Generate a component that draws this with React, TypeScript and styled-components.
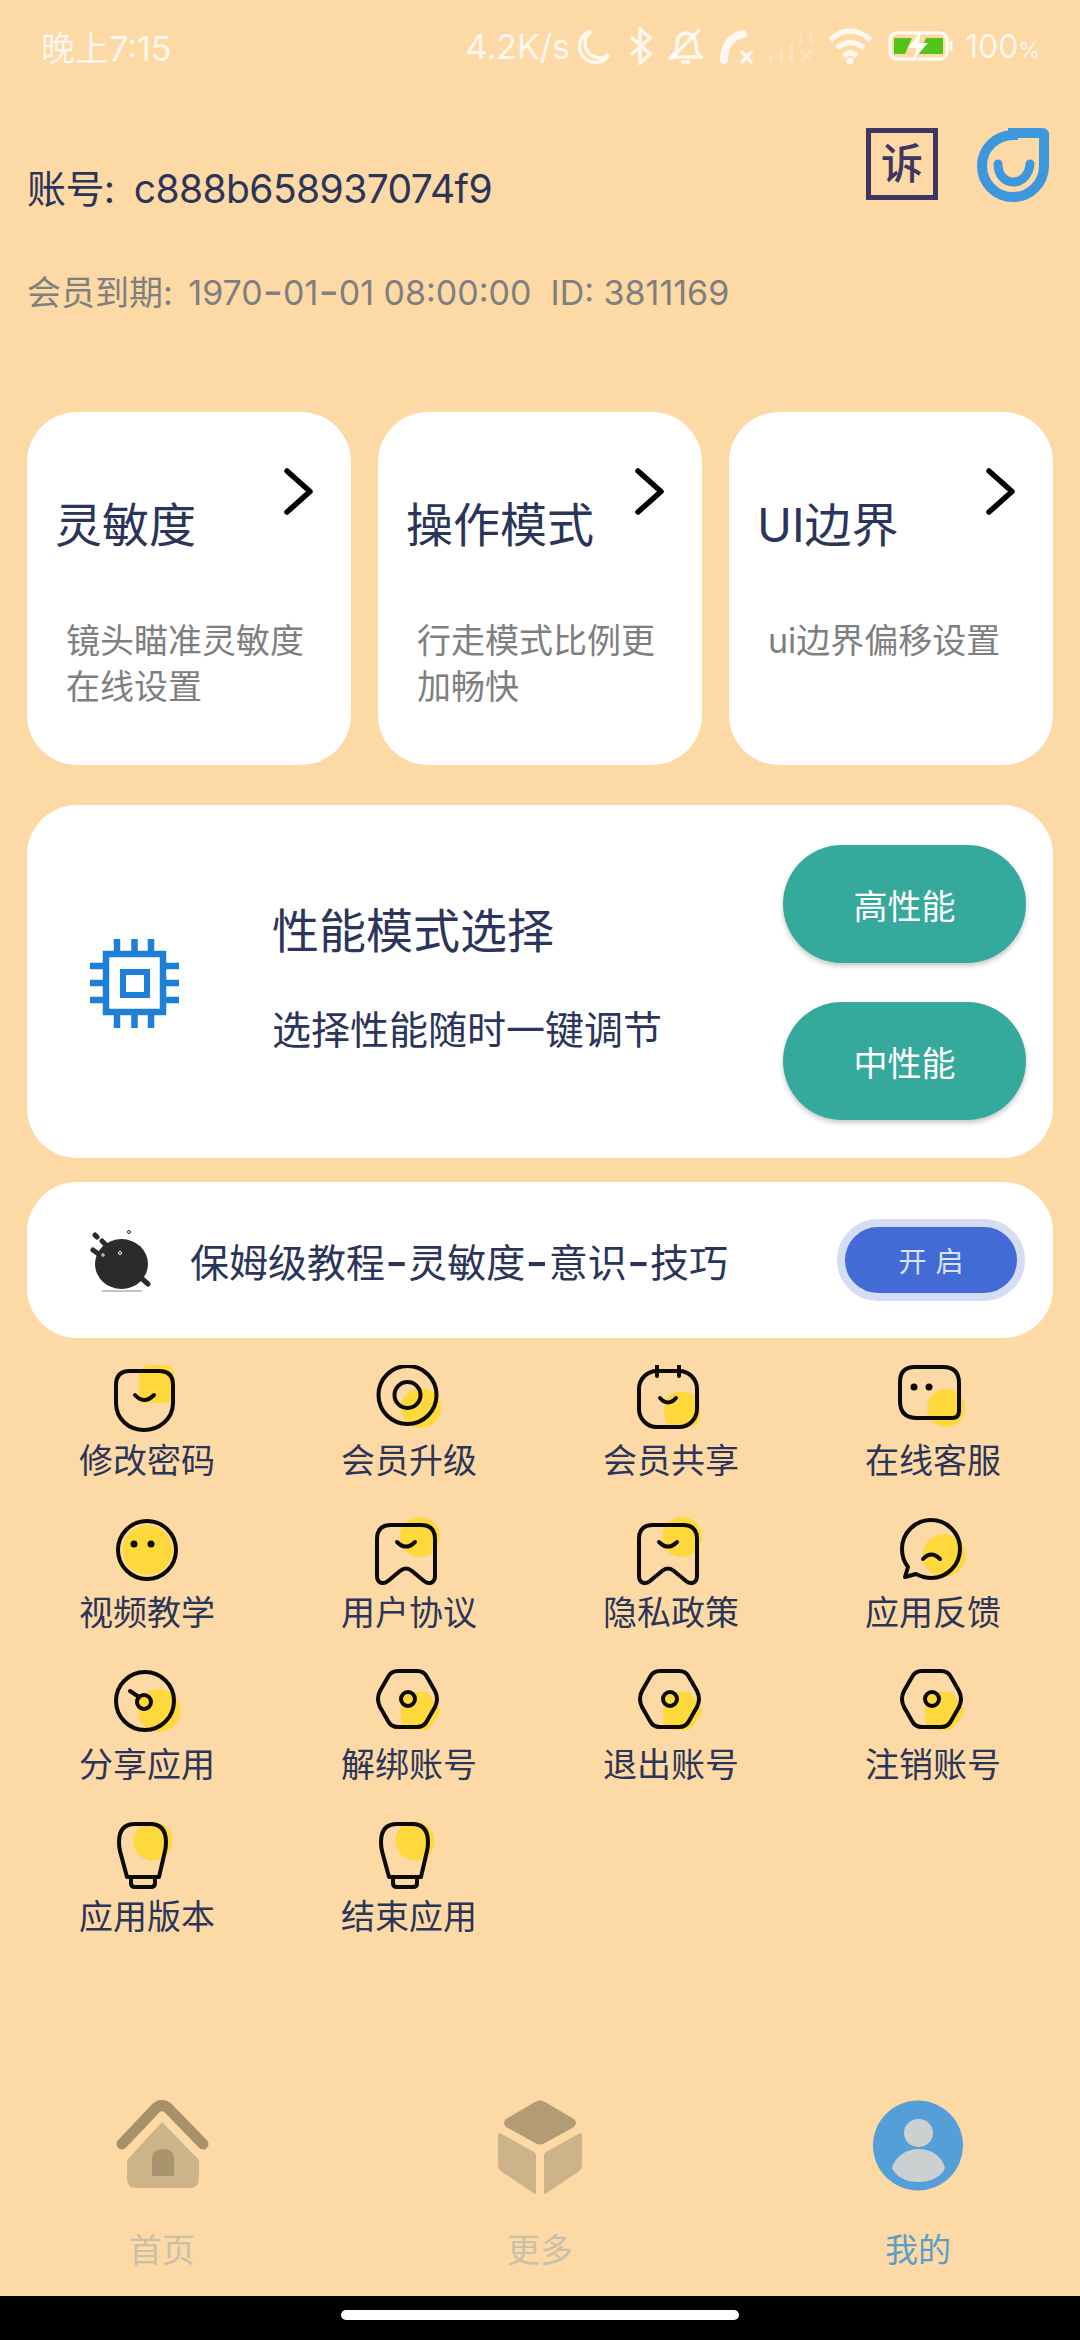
import React from 'react';
import styled, { createGlobalStyle } from 'styled-components';

const GlobalStyle = createGlobalStyle`
  html, body {
    margin: 0;
    padding: 0;
    background: #fdd9a5;
  }
  * {
    box-sizing: border-box;
  }
`;

const INK = '#2b3559';
const GREY = '#7f7f7f';
const YELLOW = '#ffd93b';
const LINE = '#0d0a06';
const STATUS = 'rgba(255, 255, 255, 0.82)';

const Page = styled.div`
  width: 1080px;
  height: 2340px;
  display: flex;
  flex-direction: column;
  background: #fdd9a5;
  font-family: Inter, 'Noto Sans CJK SC', sans-serif;
  overflow: hidden;
`;

/* status bar */
const StatusBar = styled.div`
  height: 92px;
  flex: none;
  display: flex;
  align-items: center;
  justify-content: space-between;
  padding: 0 40px 0 41px;
  color: ${STATUS};
  font-size: 34px;
`;

const StatusRight = styled.div`
  display: flex;
  align-items: center;
`;

const StatusIcon = styled.svg<{ $gap: number }>`
  display: block;
  flex: none;
  margin-left: ${(p) => p.$gap}px;
`;

const Speed = styled.span`
  font-size: 34px;
`;

const Percent = styled.span`
  margin-left: 11px;
  font-size: 32px;

  small {
    font-size: 22px;
  }
`;

/* account header */
const Header = styled.div`
  display: flex;
  justify-content: space-between;
  align-items: flex-end;
  min-height: 86px;
  margin-top: 36px;
  padding: 0 31px 0 27px;
`;

const Account = styled.div`
  font-size: 39px;
  line-height: 50px;
  letter-spacing: -0.6px;
  word-spacing: 9px;
  color: ${INK};
`;

const HeaderIcons = styled.div`
  display: flex;
  align-self: flex-start;
  gap: 38px;
`;

const ComplainBox = styled.div`
  width: 72px;
  height: 72px;
  border: 5px solid #3f3560;
  display: flex;
  align-items: center;
  justify-content: center;
  font-size: 42px;
  font-weight: 500;
  color: #3f3560;
  line-height: 1;
`;

const Expiry = styled.div`
  margin-top: 56px;
  padding-left: 27px;
  font-size: 34px;
  line-height: 46px;
  color: ${GREY};
  white-space: pre;
`;

const ExpiryLabel = styled.span`
  margin-right: 6px;
`;

const Dash = styled.span`
  font-size: 1.3em;
  line-height: 0;
  vertical-align: -0.05em;
`;

/* three setting cards */
const CardRow = styled.div`
  margin-top: 96px;
  padding: 0 27px;
  display: grid;
  grid-template-columns: repeat(3, 324px);
  gap: 27px;
`;

const SettingCard = styled.div`
  height: 353px;
  border-radius: 50px;
  background: #fff;
  padding-top: 56px;
`;

const CardArrow = styled.div`
  display: flex;
  justify-content: flex-end;
  padding-right: 38px;
`;

const CardTitle = styled.div`
  margin-top: -13px;
  padding-left: 28px;
  font-size: 47px;
  line-height: 46px;
  color: ${INK};
`;

const CardDesc = styled.div`
  margin-top: 70px;
  padding: 0 30px 0 39px;
  font-size: 34px;
  line-height: 46px;
  color: ${GREY};
`;

/* performance card */
const PerfCard = styled.div`
  margin: 40px 27px 0;
  height: 353px;
  border-radius: 50px;
  background: #fff;
  display: flex;
  padding: 40px 27px 0 63px;
`;

const ChipIcon = styled.svg`
  flex: none;
  margin-top: 94px;
`;

const PerfText = styled.div`
  flex: 1;
  margin-left: 93px;
  padding-top: 59px;
`;

const PerfTitle = styled.div`
  font-size: 47px;
  line-height: 54px;
  color: ${INK};
`;

const PerfSub = styled.div`
  margin-top: 48px;
  font-size: 39px;
  line-height: 48px;
  color: ${INK};
  white-space: nowrap;
`;

const PerfButtons = styled.div`
  flex: none;
  display: flex;
  flex-direction: column;
  gap: 39px;
`;

const PerfButton = styled.div`
  width: 243px;
  height: 118px;
  border-radius: 59px;
  background: #35a99b;
  box-shadow: 0 3px 5px rgba(0, 0, 0, 0.22);
  color: #fff;
  font-size: 34px;
  display: flex;
  align-items: center;
  justify-content: center;
`;

/* tutorial strip */
const TutorialCard = styled.div`
  margin: 24px 27px 0;
  height: 156px;
  border-radius: 50px;
  background: #fff;
  display: flex;
  align-items: center;
  padding: 0 28px 0 63px;
`;

const TutorialText = styled.div`
  flex: 1;
  margin-left: 38px;
  font-size: 39px;
  color: ${INK};
  white-space: nowrap;
`;

const OpenButton = styled.div`
  width: 188px;
  height: 82px;
  border-radius: 41px;
  border: 8px solid #d5dcf4;
  background: #426bd6;
  color: #dbe3fa;
  font-size: 28px;
  letter-spacing: 9px;
  padding-left: 9px;
  display: flex;
  align-items: center;
  justify-content: center;
`;

/* menu grid */
const MenuGrid = styled.div`
  margin-top: 27px;
  padding: 0 16px;
  display: grid;
  grid-template-columns: repeat(4, 262px);
`;

const MenuItem = styled.div`
  height: 152px;
  display: flex;
  flex-direction: column;
  align-items: center;
`;

const MenuGlyph = styled.svg`
  display: block;
  flex: none;
`;

const MenuLabel = styled.div`
  font-size: 34px;
  line-height: 52px;
  color: ${INK};
`;

/* bottom tabs */
const TabBar = styled.div`
  margin-top: auto;
  padding: 0 36px 24px;
  display: grid;
  grid-template-columns: repeat(3, 252px);
  column-gap: 126px;
`;

const Tab = styled.div`
  display: flex;
  flex-direction: column;
  align-items: center;
`;

const TabIconSlot = styled.div`
  height: 96px;
  display: flex;
  align-items: flex-start;
`;

const TabLabel = styled.div<{ $active?: boolean }>`
  margin-top: 32px;
  font-size: 33px;
  line-height: 44px;
  color: ${(p) => (p.$active ? '#5a9fc9' : '#c9c0aa')};
`;

const NavBar = styled.div`
  height: 44px;
  flex: none;
  background: #000;
  display: flex;
  justify-content: center;
  padding-top: 14px;
`;

const HomePill = styled.div`
  width: 398px;
  height: 10px;
  border-radius: 5px;
  background: #fff;
`;

const Glyph: React.FC<{ children: React.ReactNode }> = ({ children }) => (
  <MenuGlyph width={70} height={70} viewBox="0 0 70 70" fill="none" stroke={LINE} strokeWidth={4} strokeLinecap="round" strokeLinejoin="round">
    {children}
  </MenuGlyph>
);

const ShieldIcon = () => (
  <Glyph>
    <path d="M27 12 Q27 0 39 0 H52 Q62 0 62 10 V30 Q62 38 52 38 H27 Z" fill={YELLOW} stroke="none" />
    <path d="M18 6 H47 Q61 6 61 20 V38 C61 54 47 65 32 65 C17 65 4 54 4 38 V20 Q4 6 18 6 Z" />
    <path d="M23 30 Q32 40 42 30" />
  </Glyph>
);

const RingIcon = () => (
  <Glyph>
    <circle cx="47" cy="43" r="20" fill={YELLOW} stroke="none" />
    <circle cx="33.5" cy="30" r="29" />
    <circle cx="33.5" cy="30" r="13" />
  </Glyph>
);

const CalendarIcon = () => (
  <Glyph>
    <path d="M28 44 Q28 27 46 27 Q64 27 64 44 V50 Q64 62 52 62 H36 Q28 62 28 44 Z" fill={YELLOW} stroke="none" />
    <rect x="3" y="6" width="58" height="56" rx="18" />
    <path d="M21 1 V11 M43 1 V11" />
    <path d="M24 33 Q32 42 40 33" />
  </Glyph>
);

const ChatSquareIcon = () => (
  <Glyph>
    <circle cx="48" cy="43" r="19" fill={YELLOW} stroke="none" />
    <path d="M17 2 H45 Q61 2 61 18 V46 Q61 53 54 53 H19 Q2 53 2 36 V17 Q2 2 17 2 Z" />
    <circle cx="16" cy="22" r="3.5" fill={LINE} stroke="none" />
    <circle cx="31" cy="22" r="3.5" fill={LINE} stroke="none" />
  </Glyph>
);

const FaceIcon = () => (
  <Glyph>
    <circle cx="35.5" cy="33" r="25" fill={YELLOW} stroke="none" />
    <circle cx="35" cy="33" r="29" />
    <circle cx="22" cy="27" r="3.5" fill={LINE} stroke="none" />
    <circle cx="39" cy="27" r="3.5" fill={LINE} stroke="none" />
  </Glyph>
);

const ToothIcon = () => (
  <Glyph>
    <circle cx="46" cy="20" r="20" fill={YELLOW} stroke="none" />
    <path d="M17 8 H47 Q61 8 61 22 V59 C61 66 55 68 50 64 L38 54 Q32 49 26 54 L14 64 C9 68 3 66 3 59 V22 Q3 8 17 8 Z" />
    <path d="M23 25 Q32 34 41 25" />
  </Glyph>
);

const BubbleIcon = () => (
  <Glyph>
    <circle cx="46" cy="38.5" r="21.5" fill={YELLOW} stroke="none" />
    <path d="M33 3 C49 3 62 16 62 32 C62 48 49 61 33 61 C27 61 22 59 18 57 L7 60 L10 50 C6 45 4 39 4 32 C4 16 17 3 33 3 Z" />
    <path d="M25 42 Q33 33 42 42" />
  </Glyph>
);

const DialIcon = () => (
  <Glyph>
    <circle cx="47" cy="41.5" r="21.5" fill={YELLOW} stroke="none" />
    <circle cx="33" cy="32" r="29" />
    <circle cx="32" cy="33" r="7" fill={YELLOW} />
    <path d="M18 22 L27 28" />
  </Glyph>
);

const HexIcon = () => (
  <Glyph>
    <path d="M27 33 Q27 23 37 23 H53 L66 40 Q66 46 62 50 L56 58 Q54 61 50 61 H38 Q27 61 27 50 Z" fill={YELLOW} stroke="none" />
    <path d="M24 2 H43 Q50 2 53 8 L61 22 Q65 30 61 38 L53 52 Q50 58 43 58 H24 Q17 58 14 52 L6 38 Q2 30 6 22 L14 8 Q17 2 24 2 Z" />
    <circle cx="34" cy="30" r="7" fill={YELLOW} />
  </Glyph>
);

const BulbIcon = () => (
  <Glyph>
    <circle cx="41" cy="20" r="19.5" fill={YELLOW} stroke="none" />
    <path d="M23 3 H38 Q54 3 54 21 Q54 26 53 30 L47 56 H15 L8 30 Q7 26 7 21 Q7 3 23 3 Z" />
    <path d="M19 57 V62 Q19 66 23 66 H39 Q43 66 43 62 V57" />
  </Glyph>
);

const menuItems: { label: string; icon: React.FC }[] = [
  { label: '修改密码', icon: ShieldIcon },
  { label: '会员升级', icon: RingIcon },
  { label: '会员共享', icon: CalendarIcon },
  { label: '在线客服', icon: ChatSquareIcon },
  { label: '视频教学', icon: FaceIcon },
  { label: '用户协议', icon: ToothIcon },
  { label: '隐私政策', icon: ToothIcon },
  { label: '应用反馈', icon: BubbleIcon },
  { label: '分享应用', icon: DialIcon },
  { label: '解绑账号', icon: HexIcon },
  { label: '退出账号', icon: HexIcon },
  { label: '注销账号', icon: HexIcon },
  { label: '应用版本', icon: BulbIcon },
  { label: '结束应用', icon: BulbIcon },
];

const Chevron = () => (
  <svg width="30" height="47" viewBox="0 0 30 47" fill="none" stroke="#000" strokeWidth="5.5" strokeLinecap="round" strokeLinejoin="round">
    <path d="M4 3 L27 23.5 L4 44" />
  </svg>
);

const settingCards = [
  { title: '灵敏度', desc: '镜头瞄准灵敏度在线设置' },
  { title: '操作模式', desc: '行走模式比例更加畅快' },
  { title: 'UI边界', desc: 'ui边界偏移设置' },
];

const App: React.FC = () => (
  <Page>
    <GlobalStyle />
    <StatusBar>
      <span>晚上7:15</span>
      <StatusRight>
        <Speed>4.2K/s</Speed>
        <StatusIcon $gap={8} width="33" height="38" viewBox="0 0 33 38" fill="none" stroke="#fff" strokeOpacity=".82" strokeWidth="3.5">
          <path d="M13 4 A16 16 0 1 0 31 28 A15 15 0 0 1 13 4 Z" />
        </StatusIcon>
        <StatusIcon $gap={17} width="25" height="38" viewBox="0 0 25 38" fill="none" stroke="#fff" strokeOpacity=".82" strokeWidth="3.5">
          <path d="M3 10 L22 27 L12 36 V2 L22 11 L3 28" />
        </StatusIcon>
        <StatusIcon $gap={15} width="35" height="38" viewBox="0 0 35 38" fill="none" stroke="#fff" strokeOpacity=".82" strokeWidth="3.5">
          <path d="M3 30 Q9 25 9 17 Q9 7 18 6 Q27 7 28 18 Q28 26 33 30 Z" />
          <path d="M2 33 L32 2" />
          <path d="M13 35 H22" />
        </StatusIcon>
        <StatusIcon $gap={16} width="34" height="36" viewBox="0 0 34 36" fill="none" stroke="#fff" strokeOpacity=".82" strokeLinecap="round">
          <path d="M24 6 C12 8 5 18 5 32" strokeWidth="8" />
          <path d="M23 24 L32 34 M32 24 L23 34" strokeWidth="3.5" />
        </StatusIcon>
        <StatusIcon $gap={15} width="46" height="32" viewBox="0 0 46 32" fill="none" stroke="#fff" strokeOpacity=".25" strokeWidth="4">
          <path d="M3 32 V26 M13 32 V20 M23 32 V13" />
          <path d="M33 4 V14 M33 20 L44 31 M44 20 L33 31 M43 2 V14" strokeWidth="3" />
        </StatusIcon>
        <StatusIcon $gap={13} width="47" height="38" viewBox="0 0 47 38" fill="none" stroke="#fff" strokeOpacity=".82" strokeWidth="5.5">
          <path d="M3 13 Q23 -5 44 13" />
          <path d="M10 21 Q23 10 37 21" />
          <path d="M17 29 Q23 23 30 29" />
          <circle cx="23" cy="34" r="3.500" fill="#fff" fillOpacity=".82" stroke="none" />
        </StatusIcon>
        <StatusIcon $gap={14} width="66" height="30" viewBox="0 0 66 30" fill="none">
          <rect x="2" y="2" width="57" height="26" rx="7" stroke="#fff" strokeOpacity=".82" strokeWidth="3.500" />
          <path d="M6 7 H24 L17 23 H6 Z M38 7 H55 V23 H31 Z" fill="#52c41a" />
          <path d="M33 0 L20 17 H29 L24 30 L40 12 H31 Z" fill="#fff" fillOpacity=".9" />
          <path d="M63 10 V20" stroke="#fff" strokeOpacity=".82" strokeWidth="3" />
        </StatusIcon>
        <Percent>
          100<small>%</small>
        </Percent>
      </StatusRight>
    </StatusBar>

    <Header>
      <Account>账号: c888b658937074f9</Account>
      <HeaderIcons>
        <ComplainBox>诉</ComplainBox>
        <svg width="73" height="74" viewBox="0 0 73 74" fill="none" stroke="#3d97dc" strokeLinecap="round">
          <path d="M37 5 H66 Q69 5 68 8 V38 A31 31 0 1 1 37 7 Z" strokeWidth="10" />
          <path d="M22 36 C22 60 52 60 54 36" strokeWidth="9" />
        </svg>
      </HeaderIcons>
    </Header>
    <Expiry>
      <ExpiryLabel>会员到期:</ExpiryLabel> 1970<Dash>-</Dash>01<Dash>-</Dash>01 08:00:00{'  '}ID: 3811169
    </Expiry>

    <CardRow>
      {settingCards.map((c) => (
        <SettingCard key={c.title}>
          <CardArrow>
            <Chevron />
          </CardArrow>
          <CardTitle>{c.title}</CardTitle>
          <CardDesc>{c.desc}</CardDesc>
        </SettingCard>
      ))}
    </CardRow>

    <PerfCard>
      <ChipIcon width="89" height="89" viewBox="0 0 89 89" fill="none" stroke="#1d7fd6" strokeWidth="6.5">
        <rect x="16" y="15" width="57" height="58" />
        <rect x="33" y="33" width="24" height="23" strokeWidth="6" />
        <path d="M27 0 V12 M44.500 0 V12 M61 0 V12 M27 76 V89 M44.500 76 V89 M61 76 V89" />
        <path d="M0 27 H13 M0 44 H13 M0 61 H13 M76 27 H89 M76 44 H89 M76 61 H89" />
      </ChipIcon>
      <PerfText>
        <PerfTitle>性能模式选择</PerfTitle>
        <PerfSub>选择性能随时一键调节</PerfSub>
      </PerfText>
      <PerfButtons>
        <PerfButton>高性能</PerfButton>
        <PerfButton>中性能</PerfButton>
      </PerfButtons>
    </PerfCard>

    <TutorialCard>
      <svg width="62" height="67" viewBox="0 0 62 67" fill="none">
        <ellipse cx="31.500" cy="37" rx="26.500" ry="25" fill="#2b2b2b" />
        <path d="M3 23 L14 31 M12 14 L22 24 M5 8 L7 10 M50 50 L58 57" stroke="#2b2b2b" strokeWidth="5" strokeLinecap="round" />
        <circle cx="30" cy="26" r="1.500" stroke="#fff" />
        <circle cx="13" cy="28" r="1.200" stroke="#fff" />
        <circle cx="39" cy="5" r="1.500" stroke="#2b2b2b" />
        <path d="M12 64 H52" stroke="#888" strokeWidth="1" />
      </svg>
      <TutorialText>
        保姆级教程<Dash>-</Dash>灵敏度<Dash>-</Dash>意识<Dash>-</Dash>技巧
      </TutorialText>
      <OpenButton>开启</OpenButton>
    </TutorialCard>

    <MenuGrid>
      {menuItems.map(({ label, icon: Icon }) => (
        <MenuItem key={label}>
          <Icon />
          <MenuLabel>{label}</MenuLabel>
        </MenuItem>
      ))}
    </MenuGrid>

    <TabBar>
      <Tab>
        <TabIconSlot>
          <svg width="93" height="88" viewBox="0 0 93 88" fill="none">
            <path d="M46 22 L83 60 V78 Q83 88 74 88 H20 Q11 88 11 78 V60 Z" fill="#ccb388" />
            <path d="M36 76 V60 Q36 49 47 49 Q58 49 58 60 V76 Z" fill="#a8946e" />
            <path d="M6 44 L40 8 Q46 3 52 8 L87 44" stroke="#a89068" strokeWidth="11" strokeLinecap="round" strokeLinejoin="round" />
          </svg>
        </TabIconSlot>
        <TabLabel>首页</TabLabel>
      </Tab>
      <Tab>
        <TabIconSlot>
          <svg width="84" height="95" viewBox="0 0 84 95" fill="none">
            <path d="M37 2 Q42 -1 47 2 L76 19 Q80 23 76 27 L47 43 Q42 46 37 43 L8 27 Q4 23 8 19 Z" fill="#b39b75" />
            <path d="M2 33 L36 52 Q38 53 38 56 V92 Q38 96 34 92 L4 72 Q0 69 0 64 V35 Q0 32 2 33 Z" fill="#cdb389" />
            <path d="M82 33 L48 52 Q46 53 46 56 V92 Q46 96 50 92 L80 72 Q84 69 84 64 V35 Q84 32 82 33 Z" fill="#cdb389" />
          </svg>
        </TabIconSlot>
        <TabLabel>更多</TabLabel>
      </Tab>
      <Tab>
        <TabIconSlot>
          <svg width="90" height="91" viewBox="0 0 90 91" fill="none">
            <circle cx="45" cy="45.500" r="45" fill="#559fd8" />
            <ellipse cx="45.500" cy="33" rx="14.500" ry="14" fill="#ccd0d0" />
            <path d="M19 68 C22 56 34 49 45.500 49 C58 49 69 56 72 68 C68 78 56 82 45.500 82 C34 82 24 78 19 68 Z" fill="#ccd0d0" />
          </svg>
        </TabIconSlot>
        <TabLabel $active>我的</TabLabel>
      </Tab>
    </TabBar>

    <NavBar>
      <HomePill />
    </NavBar>
  </Page>
);

export default App;
